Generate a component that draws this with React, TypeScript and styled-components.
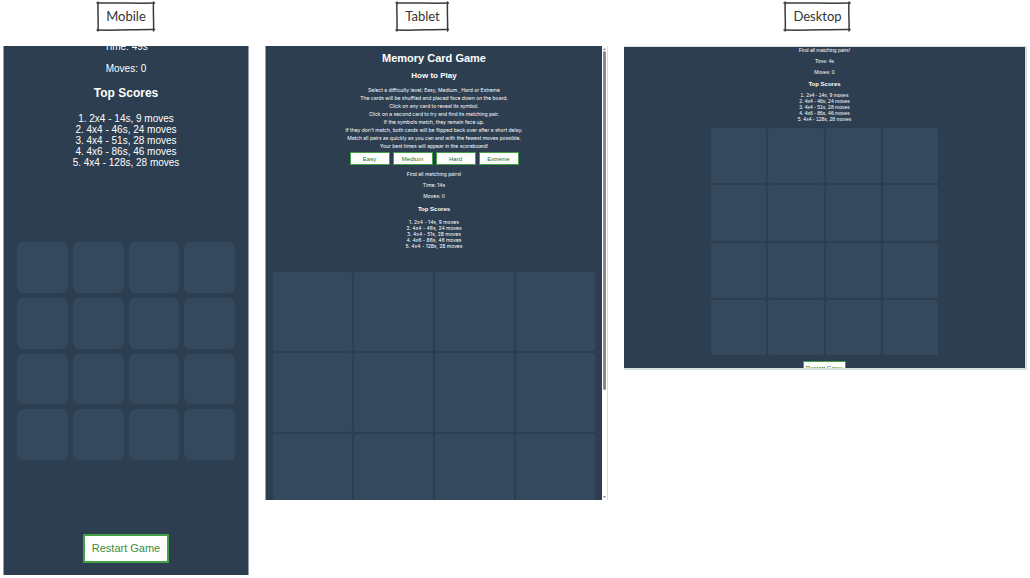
import React from "react";
import styled, { createGlobalStyle, ThemeProvider } from "styled-components";

const GlobalStyle = createGlobalStyle`
  *, *::before, *::after { box-sizing: border-box; }
  body {
    margin: 0;
    background: #fff;
    font-family: "Liberation Sans", Arial, sans-serif;
  }
  h1, h2, h3, p, ol, ul { margin: 0; padding: 0; font-size: inherit; list-style: none; }
`;

type DeviceTheme = {
  font: string;
  text: number;
  line: number;
  scoreLine: number;
  gap: number;
  heading: number;
  headingLine: number;
  headingGap: number;
  scoresGap: number;
  boardGap: number;
  boardMax: string;
  cardGap: number;
  cardRadius: number;
  restartGap: number;
};

const mobile: DeviceTheme = {
  font: '"Liberation Sans", Arial, sans-serif',
  text: 10,
  line: 12,
  scoreLine: 11,
  gap: 10,
  heading: 12,
  headingLine: 14,
  headingGap: 11,
  scoresGap: 13,
  boardGap: 74,
  boardMax: "none",
  cardGap: 5,
  cardRadius: 6,
  restartGap: 74,
};

const tablet: DeviceTheme = {
  font: 'Inter, "Liberation Sans", sans-serif',
  text: 5,
  line: 6,
  scoreLine: 6,
  gap: 5,
  heading: 6,
  headingLine: 8,
  headingGap: 6,
  scoresGap: 6,
  boardGap: 23,
  boardMax: "none",
  cardGap: 2,
  cardRadius: 2,
  restartGap: 23,
};

const desktop: DeviceTheme = {
  ...tablet,
  font: '"Liberation Sans", Arial, sans-serif',
  headingGap: 5,
  scoresGap: 4,
  boardGap: 6,
  boardMax: "227px",
  restartGap: 6,
};

const Showcase = styled.main`
  display: grid;
  grid-template-columns: 246fr 343fr 403fr;
  column-gap: 16px;
  align-items: start;
  padding: 2px 3px;
`;

const Column = styled.section`
  min-width: 0;
`;

const LabelRow = styled.header<{ $trail: number }>`
  display: flex;
  justify-content: center;
  padding-right: ${(p) => p.$trail}px;
  margin-bottom: 15px;
`;

const Label = styled.h2`
  position: relative;
  padding: 0 9px;
  color: #333;
  font: 400 13px/29px Lato, "Open Sans", sans-serif;
`;

const Frame = styled.svg`
  position: absolute;
  inset: 0;
  width: 100%;
  height: 100%;
  overflow: visible;
  fill: none;
  stroke: #3a3a3a;
  stroke-width: 1.5;
  stroke-linecap: round;
  path { vector-effect: non-scaling-stroke; }
`;

const Screen = styled.div<{ $ratio: string }>`
  display: flex;
  aspect-ratio: ${(p) => p.$ratio};
  overflow: hidden;
  background: #2c3e50;
  color: #fff;
`;

const MobileScreen = styled(Screen)`
  border: solid #93a0ab;
  border-width: 0 1px;
`;

const TabletScreen = styled(Screen)`
  border-left: 1px solid #93a0ab;
`;

const DesktopScreen = styled(Screen)`
  border: solid #d5e1da;
  border-width: 1px 2px 2px 0;
`;

const Page = styled.div<{ $pad: string; $scrolled?: number }>`
  flex: 1;
  min-width: 0;
  display: flex;
  flex-direction: column;
  align-items: center;
  padding: ${(p) => p.$pad};
  margin-top: ${(p) => -(p.$scrolled ?? 0)}px;
  text-align: center;
  font-family: ${(p) => p.theme.font};
  font-size: ${(p) => p.theme.text}px;
  line-height: ${(p) => p.theme.line}px;
  font-variant-ligatures: none;
`;

const Title = styled.h1`
  font: bold 11px/14px "Liberation Sans", Arial, sans-serif;
`;

const Subtitle = styled.h2`
  margin: 6px 0 5px;
  font: bold 8px/10px "Liberation Sans", Arial, sans-serif;
`;

const Instructions = styled.ul`
  line-height: 8px;
`;

const Levels = styled.div`
  display: flex;
  gap: 3px;
  margin: 2px 0 6px;
`;

const GameButton = styled.button<{ $w: number; $h: number; $size: number }>`
  flex: none;
  width: ${(p) => p.$w}px;
  height: ${(p) => p.$h}px;
  padding: 0;
  border: ${(p) => (p.$size > 8 ? 2 : 1)}px solid #43a047;
  background: #fff;
  color: ${(p) => (p.$size > 8 ? "#388e3c" : "#1b6e20")};
  font: ${(p) => p.$size}px/1 "Liberation Sans", Arial, sans-serif;
  white-space: nowrap;
  cursor: pointer;
`;

const Status = styled.div`
  display: flex;
  flex-direction: column;
  gap: ${(p) => p.theme.gap}px;
`;

const ScoresHeading = styled.h3`
  margin: ${(p) => p.theme.headingGap}px 0 ${(p) => p.theme.scoresGap}px;
  font: bold ${(p) => p.theme.heading}px/${(p) => p.theme.headingLine}px "Liberation Sans", Arial, sans-serif;
`;

const Scores = styled.ol`
  line-height: ${(p) => p.theme.scoreLine}px;
`;

const Board = styled.div`
  display: grid;
  grid-template-columns: repeat(4, 1fr);
  gap: ${(p) => p.theme.cardGap}px;
  width: 100%;
  max-width: ${(p) => p.theme.boardMax};
  margin: ${(p) => p.theme.boardGap}px 0 ${(p) => p.theme.restartGap}px;
`;

const Card = styled.button`
  aspect-ratio: 1;
  padding: 0;
  border: 0;
  border-radius: ${(p) => p.theme.cardRadius}px;
  background: #34495e;
  cursor: pointer;
`;

const ScrollTrack = styled.div`
  flex: none;
  display: flex;
  flex-direction: column;
  align-items: center;
  width: 6px;
  padding: 1px 0;
  border-right: 1px solid #ddd;
  background: #fff;
`;

const ScrollArrow = styled.svg`
  flex: none;
  width: 3px;
  height: 4px;
  fill: #8a8a8a;
`;

const ScrollThumb = styled.div`
  width: 3px;
  height: 75%;
  margin-bottom: auto;
  border-radius: 2px;
  background: #8b8b8b;
`;

const steps = [
  "Select a difficulty level: Easy, Medium , Hard or Extreme",
  "The cards will be shuffled and placed face down on the board.",
  "Click on any card to reveal its symbol.",
  "Click on a second card to try and find its matching pair.",
  "If the symbols match, they remain face up.",
  "If they don't match, both cards will be flipped back over after a short delay.",
  "Match all pairs as quickly as you can and with the fewest moves possible.",
  "Your best times will appear in the scoreboard!",
];

const scores = [
  "1. 2x4 - 14s, 9 moves",
  "2. 4x4 - 46s, 24 moves",
  "3. 4x4 - 51s, 28 moves",
  "4. 4x6 - 86s, 46 moves",
  "5. 4x4 - 128s, 28 moves",
];

function DeviceLabel({ name, trail = 0 }: { name: string; trail?: number }) {
  return (
    <LabelRow $trail={trail}>
      <Label>
        {name}
        <Frame viewBox="0 0 56 29" preserveAspectRatio="none" aria-hidden="true">
          <path d="M0 1 C18 0.5 36 1.5 56 1" />
          <path d="M55 0 C54.4 9 55.4 20 55 29" />
          <path d="M56 27.6 C38 27.4 20 28.6 0 28" />
          <path d="M1 0 C0.6 9 1.5 20 1 29" />
        </Frame>
      </Label>
    </LabelRow>
  );
}

function Game({ time, message }: { time: string; message?: string }) {
  return (
    <>
      <Status>
        {message && <p>{message}</p>}
        <p>Time: {time}</p>
        <p>Moves: 0</p>
      </Status>
      <ScoresHeading>Top Scores</ScoresHeading>
      <Scores>
        {scores.map((s) => (
          <li key={s}>{s}</li>
        ))}
      </Scores>
      <Board>
        {Array.from({ length: 16 }, (_, i) => (
          <Card key={i} type="button" aria-label={`Card ${i + 1}`} />
        ))}
      </Board>
    </>
  );
}

export default function App() {
  return (
    <>
      <GlobalStyle />
      <Showcase>
        <ThemeProvider theme={mobile}>
          <Column>
            <DeviceLabel name="Mobile" />
            <MobileScreen $ratio="246 / 529">
              <Page $pad="0 13px" $scrolled={5}>
                <Game time="49s" />
                <GameButton type="button" $w={86} $h={29} $size={11}>
                  Restart Game
                </GameButton>
              </Page>
            </MobileScreen>
          </Column>
        </ThemeProvider>

        <ThemeProvider theme={tablet}>
          <Column>
            <DeviceLabel name="Tablet" trail={28} />
            <TabletScreen $ratio="343 / 454">
              <Page $pad="5px 7px 0">
                <Title>Memory Card Game</Title>
                <Subtitle>How to Play</Subtitle>
                <Instructions>
                  {steps.map((s) => (
                    <li key={s}>{s}</li>
                  ))}
                </Instructions>
                <Levels>
                  {["Easy", "Medium", "Hard", "Extreme"].map((level) => (
                    <GameButton key={level} type="button" $w={40} $h={13} $size={6}>
                      {level}
                    </GameButton>
                  ))}
                </Levels>
                <Game time="14s" message="Find all matching pairs!" />
              </Page>
              <ScrollTrack>
                <ScrollArrow viewBox="0 0 3 4" aria-hidden="true">
                  <path d="M0 3 L1.5 1 L3 3 Z" />
                </ScrollArrow>
                <ScrollThumb />
                <ScrollArrow viewBox="0 0 3 4" aria-hidden="true">
                  <path d="M0 1 L1.5 3 L3 1 Z" />
                </ScrollArrow>
              </ScrollTrack>
            </TabletScreen>
          </Column>
        </ThemeProvider>

        <ThemeProvider theme={desktop}>
          <Column>
            <DeviceLabel name="Desktop" trail={16} />
            <DesktopScreen $ratio="403 / 324">
              <Page $pad="0">
                <Game time="4s" message="Find all matching pairs!" />
                <GameButton type="button" $w={43} $h={13} $size={6}>
                  Restart Game
                </GameButton>
              </Page>
            </DesktopScreen>
          </Column>
        </ThemeProvider>
      </Showcase>
    </>
  );
}
